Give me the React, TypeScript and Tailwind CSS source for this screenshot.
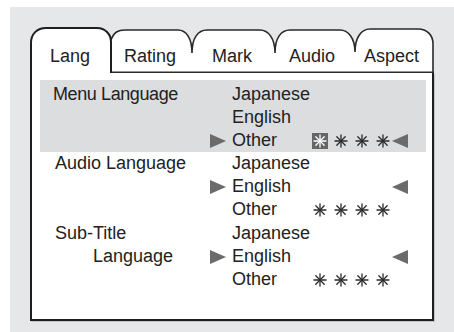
const font = { fontFamily: "'Liberation Sans', Arial, sans-serif" };

function Star({ active = false }: { active?: boolean }) {
  return (
    <span
      className={`flex h-[16px] w-[16px] items-center justify-center ${active ? 'bg-[#666666]' : ''}`}
    >
      <svg width="14" height="14" viewBox="0 0 14 14">
        <g stroke={active ? '#ffffff' : '#2a2a2a'} strokeWidth="1.3" strokeLinecap="round">
          <line x1="7" y1="1" x2="7" y2="13" />
          <line x1="1" y1="7" x2="13" y2="7" />
          <line x1="2.8" y1="2.8" x2="11.2" y2="11.2" />
          <line x1="2.8" y1="11.2" x2="11.2" y2="2.8" />
        </g>
      </svg>
    </span>
  );
}

function Stars({ first = false }: { first?: boolean }) {
  return (
    <div className="flex w-[80px] gap-[5px]">
      <Star active={first} />
      <Star />
      <Star />
      <Star />
    </div>
  );
}

function ArrowRight() {
  return (
    <svg width="16" height="14" viewBox="0 0 16 14">
      <polygon points="0,0 16,7 0,14" fill="#6b6b6b" />
    </svg>
  );
}

function ArrowLeft() {
  return (
    <svg width="16" height="14" viewBox="0 0 16 14">
      <polygon points="16,0 0,7 16,14" fill="#6b6b6b" />
    </svg>
  );
}

interface LineProps {
  text: string;
  selected?: boolean;
  stars?: boolean;
  firstActive?: boolean;
}

function Line({ text, selected, stars, firstActive }: LineProps) {
  return (
    <div className="flex h-[23px] items-center">
      <div className="w-[22px]">{selected && <ArrowRight />}</div>
      <span className="w-[80px] leading-[23px]">{text}</span>
      {stars ? <Stars first={firstActive} /> : <div className="w-[80px]" />}
      {selected && <ArrowLeft />}
    </div>
  );
}

function TabStrip() {
  return (
    <div className="relative h-[47px] w-[404px]">
      <svg className="absolute inset-0" width="404" height="47" viewBox="0 0 404 47">
        <path
          d="M 81 14 C 84 6, 88 4, 95 4 L 148 4 C 156 4, 162 12, 162 27 C 162 12, 168 4, 177 4 L 230 4 C 238 4, 245 12, 245 27 C 245 12, 251 4, 260 4 L 310 4 C 318 4, 325 12, 325 26 C 325 12, 331 3, 340 3 L 388 3 C 397 3, 403 9, 403 18 L 403 47 L 81 47 Z"
          fill="#ffffff"
        />
        <path
          d="M 81 14 C 84 6, 88 4, 95 4 L 148 4 C 156 4, 162 12, 162 27 C 162 12, 168 4, 177 4 L 230 4 C 238 4, 245 12, 245 27 C 245 12, 251 4, 260 4 L 310 4 C 318 4, 325 12, 325 26 C 325 12, 331 3, 340 3 L 388 3 C 397 3, 403 9, 403 18 L 403 47"
          fill="none"
          stroke="#2a2a2a"
          strokeWidth="1.6"
        />
        <line x1="81" y1="46.2" x2="404" y2="46.2" stroke="#2a2a2a" strokeWidth="1.6" />
        <path
          d="M 1 47 L 1 17 C 1 8, 7 2, 16 2 L 67 2 C 75 2, 81 8, 81 16 L 81 47"
          fill="#ffffff"
          stroke="#1e1e1e"
          strokeWidth="2"
        />
      </svg>
      <div className="relative flex pt-[20px] text-[18px] leading-[20px] text-[#222]">
        <span className="w-[81px] pl-[20px]">Lang</span>
        <span className="w-[81px] pl-[13px]">Rating</span>
        <span className="w-[83px] pl-[20px]">Mark</span>
        <span className="w-[80px] pl-[14px]">Audio</span>
        <span className="w-[79px] pl-[9px]">Aspect</span>
      </div>
    </div>
  );
}

export default function App() {
  return (
    <div className="h-[332px] w-[454px] bg-white pl-[10px] pt-[7px]" style={font}>
      <div className="h-full w-full bg-[#e6e7e9] pl-[20px] pt-[19px]">
        <TabStrip />
        <div className="h-[248px] w-[404px] border-x-2 border-b-2 border-[#1e1e1e] bg-white pt-[7px] text-[18px] leading-[23px] text-[#222] shadow-[1px_1px_0_#c4c4c4]">
          <div className="ml-[8px] mr-[6px] flex bg-[#dcdddf] pt-[3px]">
            <div className="w-[170px] pl-[13px] tracking-[-0.4px]">Menu Language</div>
            <div>
              <Line text="Japanese" />
              <Line text="English" />
              <Line text="Other" selected stars firstActive />
            </div>
          </div>
          <div className="ml-[8px] mr-[6px] flex">
            <div className="w-[170px] pl-[15px]">Audio Language</div>
            <div>
              <Line text="Japanese" />
              <Line text="English" selected />
              <Line text="Other" stars />
            </div>
          </div>
          <div className="ml-[8px] mr-[6px] flex pt-[1px]">
            <div className="w-[170px] pl-[15px]">
              <div>Sub-Title</div>
              <div className="pl-[38px]">Language</div>
            </div>
            <div>
              <Line text="Japanese" />
              <Line text="English" selected />
              <Line text="Other" stars />
            </div>
          </div>
        </div>
      </div>
    </div>
  );
}
